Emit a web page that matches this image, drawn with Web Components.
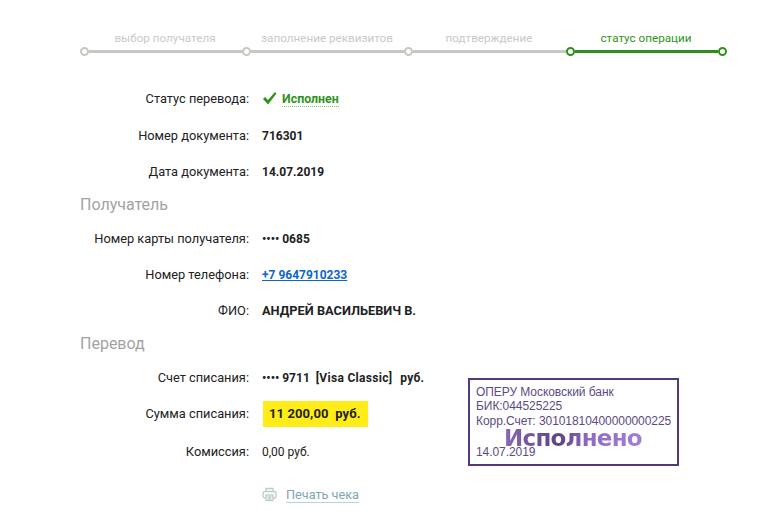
<!DOCTYPE html>
<html lang="ru">
<head>
<meta charset="utf-8">
<title>Статус операции</title>
<style>
  html, body { margin: 0; background: #fff; }
  body { font-family: Roboto, "Liberation Sans", sans-serif; font-size: 12px; color: #222; }
</style>
</head>
<body>
<transfer-page>
  <step-bar slot="steps">
    <step-item>выбор получателя</step-item>
    <step-item>заполнение реквизитов</step-item>
    <step-item>подтверждение</step-item>
    <step-item active last>статус операции</step-item>
  </step-bar>

  <detail-row label="Статус перевода:" gap="0">
    <status-ok>Исполнен</status-ok>
  </detail-row>
  <detail-row label="Номер документа:" gap="17"><b>716301</b></detail-row>
  <detail-row label="Дата документа:" gap="18"><b>14.07.2019</b></detail-row>

  <section-title>Получатель</section-title>
  <detail-row label="Номер карты получателя:" gap="15"><b>•••• 0685</b></detail-row>
  <detail-row label="Номер телефона:" gap="18"><a href="#" style="color:#0b66c9;font-weight:700">+7 9647910233</a></detail-row>
  <detail-row label="ФИО:" gap="18"><b style="font-size:12.800px">АНДРЕЙ ВАСИЛЬЕВИЧ В.</b></detail-row>

  <section-title>Перевод</section-title>
  <detail-row label="Счет списания:" gap="15"><b>•••• 9711&nbsp; <span style="letter-spacing:.3px">[Visa Classic]</span>&nbsp; <span style="margin-left:2px;letter-spacing:.2px">руб.</span></b></detail-row>
  <detail-row label="Сумма списания:" gap="14"><amount-mark>11 200,00&nbsp; руб.</amount-mark></detail-row>
  <detail-row label="Комиссия:" gap="16"><span>0,00 руб.</span></detail-row>
  <print-link>Печать чека</print-link>

  <bank-stamp slot="stamp"></bank-stamp>
</transfer-page>

<script>
class TransferPage extends HTMLElement {
  constructor() {
    super();
    this.attachShadow({ mode: 'open' }).innerHTML = `
      <style>
        :host { display: block; position: relative; width: 760px; height: 525px; overflow: hidden; }
        .steps { padding: 31px 0 0 84px; }
        .body { padding-top: 33px; }
        ::slotted([slot=stamp]) { position: absolute; left: 468px; top: 378px; }
      </style>
      <div class="steps"><slot name="steps"></slot></div>
      <div class="body"><slot></slot></div>
      <slot name="stamp"></slot>`;
  }
}

class StepBar extends HTMLElement {
  constructor() {
    super();
    this.attachShadow({ mode: 'open' }).innerHTML = `
      <style>:host { display: flex; }</style>
      <slot></slot>`;
  }
}

class StepItem extends HTMLElement {
  constructor() {
    super();
    this.attachShadow({ mode: 'open' }).innerHTML = `
      <style>
        :host { display: block; width: 162px; color: #c9c9c9; --line: #c8c8c2; }
        :host([active]) { width: 152px; color: #2f9419; --line: #2f8f1d; }
        .label { height: 15px; line-height: 15px; text-align: center; font-size: 11.700px; }
        .track { display: flex; align-items: center; height: 9px; margin-top: 1px; margin-left: -4px; }
        .dot { flex: none; box-sizing: border-box; width: 9px; height: 9px; border: 2px solid var(--line); border-radius: 50%; background: #fff; }
        .line { flex: 1; height: 3px; background: var(--line); }
        .end { display: none; }
        :host([last]) .end { display: block; margin-right: -5px; }
      </style>
      <div class="label"><slot></slot></div>
      <div class="track"><span class="dot"></span><span class="line"></span><span class="dot end"></span></div>`;
  }
}

class DetailRow extends HTMLElement {
  static get observedAttributes() {
    return ['label', 'gap'];
  }

  constructor() {
    super();
    this.attachShadow({ mode: 'open' }).innerHTML = `
      <style>
        :host { display: flex; align-items: center; min-height: 18px; line-height: 18px; }
        .label { flex: none; box-sizing: border-box; width: 249px; text-align: right; font-size: 12.800px; color: #222; }
        .value { margin-left: 13px; font-size: 12px; color: #222; }
      </style>
      <span class="label"></span>
      <span class="value"><slot></slot></span>`;
  }

  attributeChangedCallback(name, _oldValue, newValue) {
    if (name === 'label') {
      this.shadowRoot.querySelector('.label').textContent = newValue;
    }
    if (name === 'gap') {
      this.style.marginTop = `${newValue}px`;
    }
  }
}

class SectionTitle extends HTMLElement {
  constructor() {
    super();
    this.attachShadow({ mode: 'open' }).innerHTML = `
      <style>
        :host { display: block; margin: 14px 0 0 80px; font-size: 16px; line-height: 20px; color: #a3a3a3; }
      </style>
      <slot></slot>`;
  }
}

class StatusOk extends HTMLElement {
  constructor() {
    super();
    this.attachShadow({ mode: 'open' }).innerHTML = `
      <style>
        :host { display: inline-flex; align-items: center; gap: 5px; color: #2f9419; font-weight: 700; font-size: 12.400px; }
        svg { display: block; }
        span { border-bottom: 1px dotted #7fc36f; line-height: 14px; margin-top: 3px; }
      </style>
      <svg width="15" height="13" viewBox="0 0 15 13"><path d="M1 7l2-2 3 3 7-8 1.500 1.500L6 12.500z" fill="#2f9419"/></svg>
      <span><slot></slot></span>`;
  }
}

class AmountMark extends HTMLElement {
  constructor() {
    super();
    this.attachShadow({ mode: 'open' }).innerHTML = `
      <style>
        :host { display: block; box-sizing: border-box; width: 105px; height: 26px; margin-left: 1px; padding-left: 6px; line-height: 26px; background: #ffec19; font-weight: 700; font-size: 13px; letter-spacing: .1px; color: #222; white-space: nowrap; }
      </style>
      <slot></slot>`;
  }
}

class PrintLink extends HTMLElement {
  constructor() {
    super();
    this.attachShadow({ mode: 'open' }).innerHTML = `
      <style>
        :host { display: flex; align-items: center; gap: 9px; margin: 26px 0 0 262px; font-size: 12.700px; color: #7ea6b3; }
        span { border-bottom: 1px solid #bcd2d9; line-height: 15px; }
        svg { display: block; }
      </style>
      <svg width="15" height="15" viewBox="0 0 15 15" fill="none" stroke="#bccbcb" stroke-width="1.300">
        <path d="M4 4V1.500h7V4"/>
        <rect x="1" y="4.500" width="13" height="6.500" rx="2"/>
        <rect x="4" y="8" width="7" height="5.500" fill="#fff"/>
        <path d="M5.500 10h4M5.500 12h4"/>
      </svg>
      <span><slot></slot></span>`;
  }
}

class BankStamp extends HTMLElement {
  constructor() {
    super();
    this.attachShadow({ mode: 'open' }).innerHTML = `
      <style>
        :host { display: block; box-sizing: border-box; width: 211px; height: 88px; padding: 5px 6px 0 6px; border: 2px solid #53397f; background: #fff; font: 12px/14.300px "Liberation Sans", Arial, sans-serif; letter-spacing: -.06px; color: #5c4a86; white-space: nowrap; }
        .big { position: absolute; left: 34px; top: 46px; font: 700 23px/24px "DejaVu Sans", sans-serif; letter-spacing: -.75px; color: transparent;
          background: linear-gradient(90deg, #8a68b4 0, #5d4386 40%, #8f6cc4 62%, #a37ed8 100%); -webkit-background-clip: text; background-clip: text; }
        .date { margin-top: 17px; }
      </style>
      <div>ОПЕРУ Московский банк</div>
      <div>БИК:044525225</div>
      <div>Корр.Счет: 30101810400000000225</div>
      <div class="date">14.07.2019</div>
      <div class="big">Исполнено</div>`;
  }
}

customElements.define('transfer-page', TransferPage);
customElements.define('step-bar', StepBar);
customElements.define('step-item', StepItem);
customElements.define('detail-row', DetailRow);
customElements.define('section-title', SectionTitle);
customElements.define('status-ok', StatusOk);
customElements.define('amount-mark', AmountMark);
customElements.define('print-link', PrintLink);
customElements.define('bank-stamp', BankStamp);
</script>
</body>
</html>
